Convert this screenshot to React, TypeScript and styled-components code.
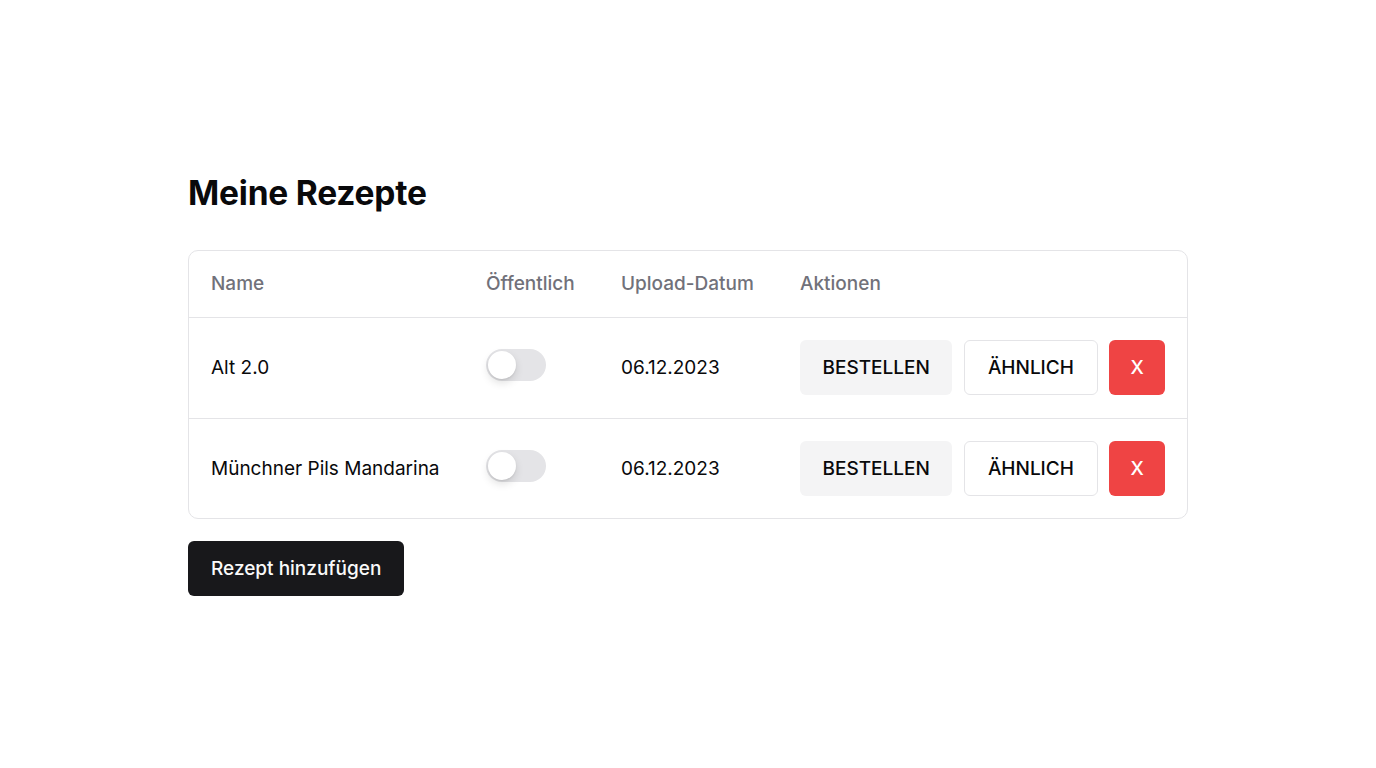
import React from "react";
import styled, { createGlobalStyle } from "styled-components";

const Global = createGlobalStyle`
  html, body { margin: 0; padding: 0; background: #ffffff; }
  body { font-family: Inter, "Noto Sans", sans-serif; color: #09090b; }
  * { box-sizing: border-box; }
`;

const Page = styled.div`
  width: 1000px;
  margin: 0 auto;
  padding-top: 170px;
  display: flex;
  flex-direction: column;
  align-items: flex-start;
`;

const Title = styled.h1`
  margin: 0 0 34px 0;
  font-size: 33.5px;
  line-height: 46px;
  font-weight: 700;
  letter-spacing: -0.2px;
  color: #09090b;
`;

const TableBox = styled.div`
  width: 100%;
  border: 1px solid #e4e4e7;
  border-radius: 10px;
  overflow: hidden;
`;

const Table = styled.table`
  width: 100%;
  border-collapse: collapse;
  table-layout: fixed;
`;

const HeadCell = styled.th<{ $w?: number }>`
  text-align: left;
  font-weight: 500;
  font-size: 19px;
  color: #71717a;
  height: 66px;
  padding: 0 22px;
  border-bottom: 1px solid #e4e4e7;
  white-space: nowrap;
  ${(p) => (p.$w ? `width: ${p.$w}px;` : "")}
`;

const Row = styled.tr<{ $last?: boolean }>`
  td {
    height: ${(p) => (p.$last ? "100px" : "101px")};
    border-bottom: ${(p) => (p.$last ? "none" : "1px solid #e4e4e7")};
  }
`;

const Cell = styled.td`
  font-size: 19px;
  color: #09090b;
  padding: 0 22px;
  white-space: nowrap;
  vertical-align: middle;
`;

const Actions = styled.div`
  display: flex;
  gap: 11.5px;
  align-items: center;
`;

const Btn = styled.button<{ $variant: "secondary" | "outline" | "danger" }>`
  height: 55px;
  padding: 0 ${(p) => (p.$variant === "outline" ? "23px" : "21.5px")};
  border-radius: 6px;
  font-family: Inter, "Noto Sans", sans-serif;
  font-size: 19px;
  font-weight: 500;
  cursor: pointer;
  border: 1px solid
    ${(p) => (p.$variant === "outline" ? "#e4e4e7" : "transparent")};
  background: ${(p) =>
    p.$variant === "secondary"
      ? "#f4f4f5"
      : p.$variant === "danger"
      ? "#ef4444"
      : "#ffffff"};
  color: ${(p) => (p.$variant === "danger" ? "#ffffff" : "#09090b")};
  ${(p) => (p.$variant === "danger" ? "width: 57px; padding: 0;" : "")}
`;

const Toggle = styled.div`
  width: 60px;
  height: 32px;
  margin-bottom: 5px;
  border-radius: 16px;
  background: #e4e4e7;
  padding: 2px;
  display: flex;
  align-items: center;
`;

const Knob = styled.div`
  width: 28px;
  height: 28px;
  border-radius: 50%;
  background: #ffffff;
  box-shadow: 0 4px 8px rgba(0, 0, 0, 0.12), 0 1px 2px rgba(0, 0, 0, 0.08);
`;

const PrimaryBtn = styled.button`
  margin-top: 22px;
  height: 55px;
  padding: 0 23px;
  border: none;
  border-radius: 6px;
  background: #18181b;
  color: #fafafa;
  font-family: Inter, "Noto Sans", sans-serif;
  font-size: 19px;
  font-weight: 500;
  cursor: pointer;
`;

const recipes = [
  { name: "Alt 2.0", date: "06.12.2023" },
  { name: "Münchner Pils Mandarina", date: "06.12.2023" },
];

export default function App() {
  return (
    <>
      <Global />
      <Page>
        <Title>Meine Rezepte</Title>
        <TableBox>
          <Table>
            <thead>
              <tr>
                <HeadCell $w={275}>Name</HeadCell>
                <HeadCell $w={135}>Öffentlich</HeadCell>
                <HeadCell $w={179}>Upload-Datum</HeadCell>
                <HeadCell>Aktionen</HeadCell>
              </tr>
            </thead>
            <tbody>
              {recipes.map((r, i) => (
                <Row key={i} $last={i === recipes.length - 1}>
                  <Cell>{r.name}</Cell>
                  <Cell>
                    <Toggle>
                      <Knob />
                    </Toggle>
                  </Cell>
                  <Cell>{r.date}</Cell>
                  <Cell>
                    <Actions>
                      <Btn $variant="secondary">BESTELLEN</Btn>
                      <Btn $variant="outline">ÄHNLICH</Btn>
                      <Btn $variant="danger">X</Btn>
                    </Actions>
                  </Cell>
                </Row>
              ))}
            </tbody>
          </Table>
        </TableBox>
        <PrimaryBtn>Rezept hinzufügen</PrimaryBtn>
      </Page>
    </>
  );
}
